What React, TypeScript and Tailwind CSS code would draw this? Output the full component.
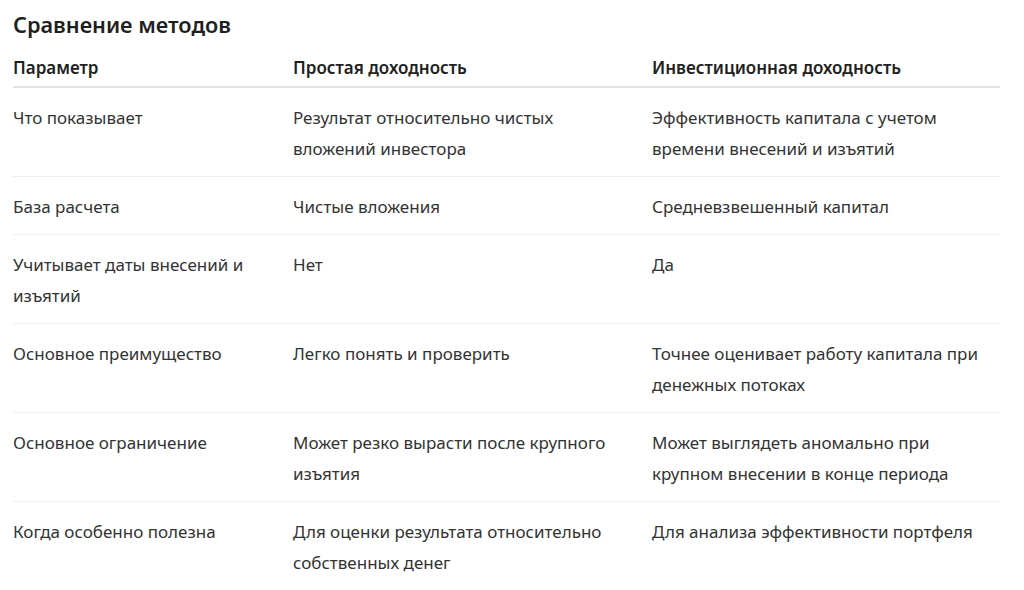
const rows = [
  {
    param: "Что показывает",
    simple: "Результат относительно чистых\nвложений инвестора",
    invest: "Эффективность капитала с учетом\nвремени внесений и изъятий",
  },
  {
    param: "База расчета",
    simple: "Чистые вложения",
    invest: "Средневзвешенный капитал",
  },
  {
    param: "Учитывает даты внесений и\nизъятий",
    simple: "Нет",
    invest: "Да",
  },
  {
    param: "Основное преимущество",
    simple: "Легко понять и проверить",
    invest: "Точнее оценивает работу капитала при\nденежных потоках",
  },
  {
    param: "Основное ограничение",
    simple: "Может резко вырасти после крупного\nизъятия",
    invest: "Может выглядеть аномально при\nкрупном внесении в конце периода",
  },
  {
    param: "Когда особенно полезна",
    simple: "Для оценки результата относительно\nсобственных денег",
    invest: "Для анализа эффективности портфеля",
  },
];

export default function App() {
  return (
    <div
      className="min-h-[590px] w-[1024px] bg-white pl-[13px] pr-[24px] text-[#333]"
      style={{ fontFamily: '"Noto Sans", "Open Sans", sans-serif' }}
    >
      <h2 className="pt-[10px] text-[21.7px] font-semibold leading-[30px] text-[#1f1f1f]">
        Сравнение методов
      </h2>
      <table className="mt-[2px] w-[987px] table-fixed border-collapse text-left text-[17px]">
        <colgroup>
          <col className="w-[280px]" />
          <col className="w-[359px]" />
          <col />
        </colgroup>
        <thead>
          <tr className="border-b-2 border-[#e3e3e3] leading-[30px]">
            <th className="pb-[3px] pt-[11px] pr-6 font-semibold text-[#222]">Параметр</th>
            <th className="pb-[3px] pt-[11px] pr-6 font-semibold text-[#222]">Простая доходность</th>
            <th className="pb-[3px] pt-[11px] font-semibold text-[#222]">Инвестиционная доходность</th>
          </tr>
        </thead>
        <tbody className="leading-[31px]">
          {rows.map((r) => (
            <tr key={r.param} className="border-b border-[#efefef] align-top">
              <td className="whitespace-pre-line pt-[14px] pb-[12px] pr-4">{r.param}</td>
              <td className="whitespace-pre-line pt-[14px] pb-[12px] pr-4">{r.simple}</td>
              <td className="whitespace-pre-line pt-[14px] pb-[12px]">{r.invest}</td>
            </tr>
          ))}
        </tbody>
      </table>
    </div>
  );
}
